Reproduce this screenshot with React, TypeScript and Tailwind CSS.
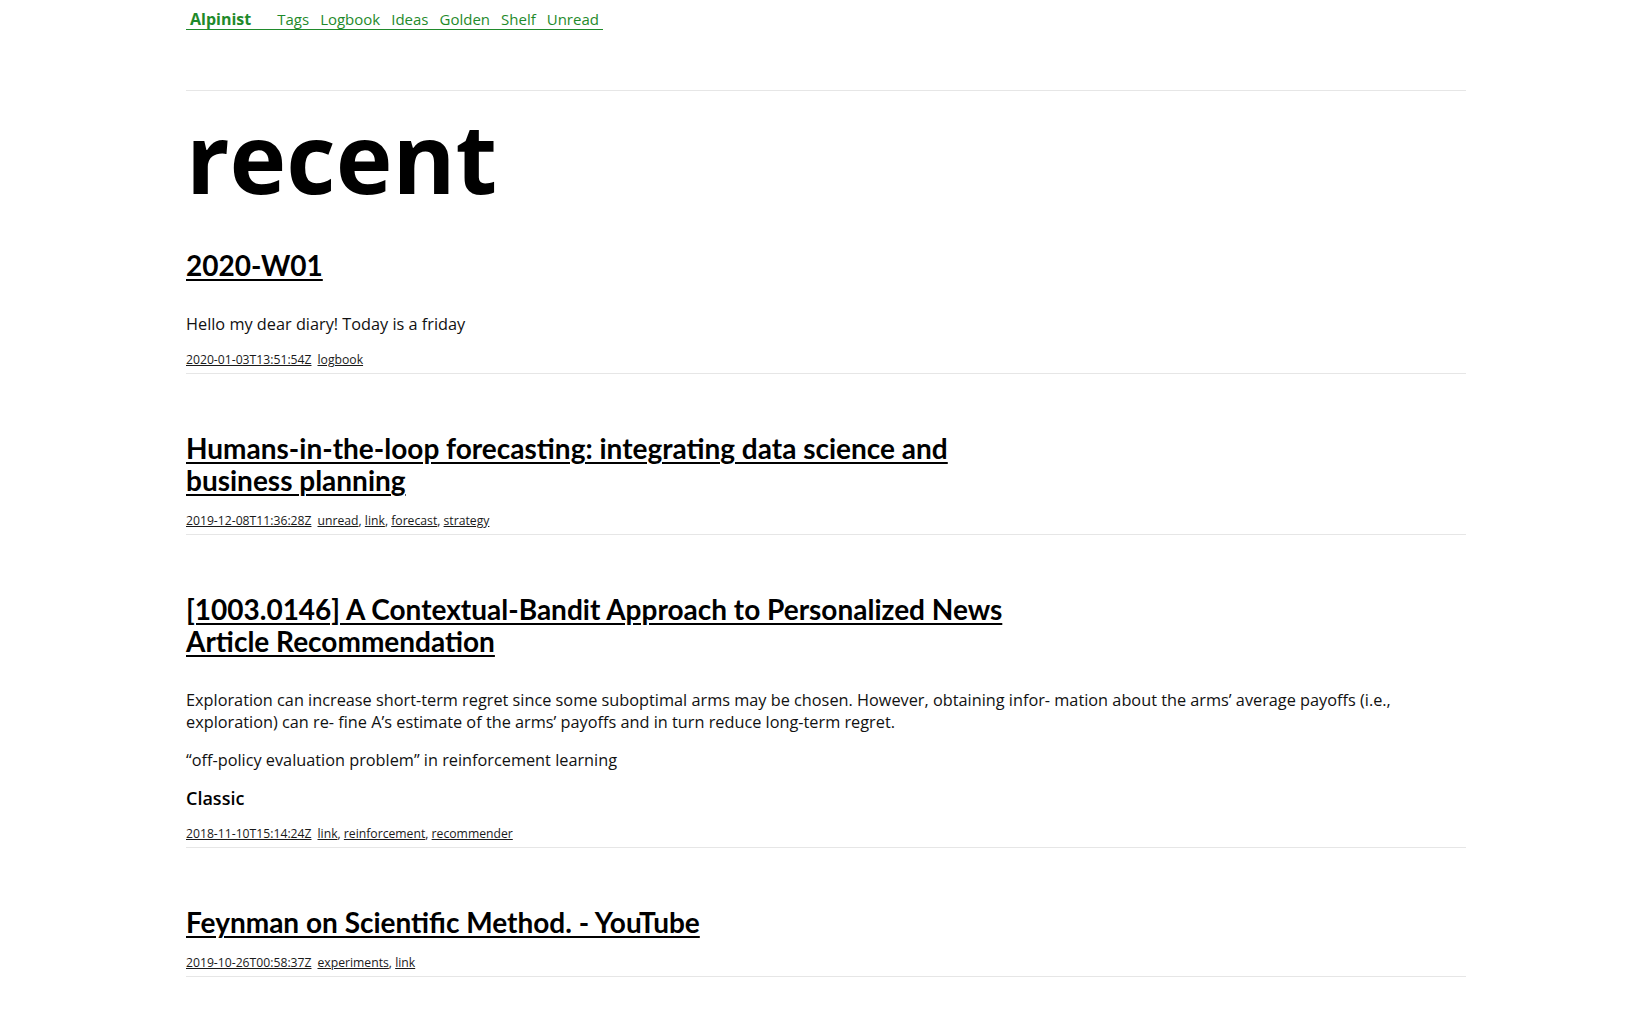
const navItems = ["Tags", "Logbook", "Ideas", "Golden", "Shelf", "Unread"];

type Post = {
  title: string;
  body?: string[];
  subhead?: string;
  date: string;
  tags: string[];
};

const posts: Post[] = [
  {
    title: "2020-W01",
    body: ["Hello my dear diary! Today is a friday"],
    date: "2020-01-03T13:51:54Z",
    tags: ["logbook"],
  },
  {
    title: "Humans-in-the-loop forecasting: integrating data science and business planning",
    date: "2019-12-08T11:36:28Z",
    tags: ["unread", "link", "forecast", "strategy"],
  },
  {
    title: "[1003.0146] A Contextual-Bandit Approach to Personalized News Article Recommendation",
    body: [
      "Exploration can increase short-term regret since some suboptimal arms may be chosen. However, obtaining infor- mation about the arms’ average payoffs (i.e., exploration) can re- fine A’s estimate of the arms’ payoffs and in turn reduce long-term regret.",
      "“off-policy evaluation problem” in reinforcement learning",
    ],
    subhead: "Classic",
    date: "2018-11-10T15:14:24Z",
    tags: ["link", "reinforcement", "recommender"],
  },
  {
    title: "Feynman on Scientific Method. - YouTube",
    date: "2019-10-26T00:58:37Z",
    tags: ["experiments", "link"],
  },
];

function SiteNav() {
  return (
    <nav className="pt-[7px]">
      <div className="inline-flex items-center border-b border-[#1f8a2b] pr-[4px] text-[15px] leading-[20px] text-[#1f8a2b]">
        <a href="#" className="mr-[26px] pl-[4px] text-[16px] font-bold">
          Alpinist
        </a>
        <div className="flex items-center gap-[11px]">
          {navItems.map((item) => (
            <a key={item} href="#">
              {item}
            </a>
          ))}
        </div>
      </div>
    </nav>
  );
}

function PostMeta({ date, tags }: { date: string; tags: string[] }) {
  return (
    <div className="mt-[17px] text-[12.2px] leading-[15px] text-[#1a1a1a]">
      <a href="#" className="underline">
        {date}
      </a>
      <span className="ml-[6px]">
        {tags.map((tag, i) => (
          <span key={tag}>
            <a href="#" className="underline">
              {tag}
            </a>
            {i < tags.length - 1 ? ", " : ""}
          </span>
        ))}
      </span>
    </div>
  );
}

function PostItem({ post, first }: { post: Post; first: boolean }) {
  return (
    <article className={first ? "mt-[44px]" : "mt-[58px]"}>
      <h2 className="max-w-[840px] font-['Lato',sans-serif] text-[28px] font-bold leading-[32px] text-black">
        <a href="#" className="underline decoration-2 underline-offset-[3px]">
          {post.title}
        </a>
      </h2>
      {(post.body || post.subhead) && (
        <div className="mt-[32px] flex flex-col gap-4 text-[16.3px] leading-[22px] text-[#111]">
          {post.body?.map((p) => (
            <p key={p}>{p}</p>
          ))}
          {post.subhead && (
            <h3 className="text-[18px] font-semibold leading-[22px] text-black">{post.subhead}</h3>
          )}
        </div>
      )}
      <PostMeta date={post.date} tags={post.tags} />
      <div className="mt-[6px] border-b border-[#e6e6e6]" />
    </article>
  );
}

export default function App() {
  return (
    <div className="min-h-screen bg-white font-['Open_Sans',sans-serif] text-black">
      <div className="mx-auto max-w-[1280px]">
        <SiteNav />
        <div className="mt-[59px] border-t border-[#e6e6e6]" />
        <h1 className="mt-[18px] text-[96px] font-bold leading-none">recent</h1>
        {posts.map((post, i) => (
          <PostItem key={post.date} post={post} first={i === 0} />
        ))}
      </div>
    </div>
  );
}
